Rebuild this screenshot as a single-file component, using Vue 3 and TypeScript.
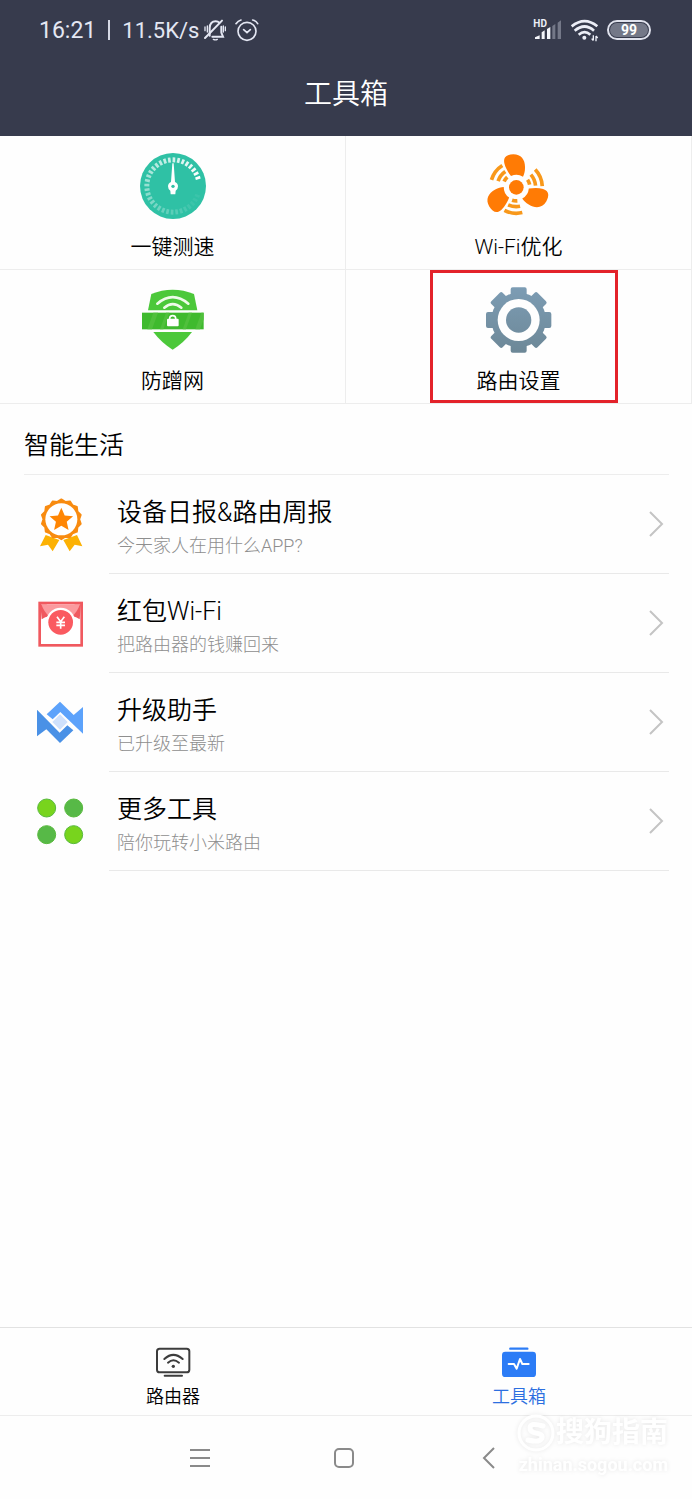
<script setup lang="ts">
interface Tool {
  id: string
  label: string
}
interface Entry {
  id: string
  title: string
  note: string
}
interface Tick {
  angle: number
  opacity: number
}

const tools: Tool[] = [
  { id: 'speed', label: '一键测速' },
  { id: 'fan', label: 'Wi-Fi优化' },
  { id: 'shield', label: '防蹭网' },
  { id: 'gear', label: '路由设置' },
]

const entries: Entry[] = [
  { id: 'badge', title: '设备日报&路由周报', note: '今天家人在用什么APP?' },
  { id: 'packet', title: '红包Wi-Fi', note: '把路由器的钱赚回来' },
  { id: 'upgrade', title: '升级助手', note: '已升级至最新' },
  { id: 'more', title: '更多工具', note: '陪你玩转小米路由' },
]

// Gauge ticks run counter-clockwise and fade out towards the end of the scale.
const ticks: Tick[] = Array.from({ length: 33 }, (_, i) => ({
  angle: 72 - i * 10,
  opacity: Math.max(0.06, 1 - i / 32),
}))

const ring = (cx: number, cy: number, outer: number, inner: number, count: number): string =>
  Array.from({ length: count * 2 }, (_, i) => {
    const r = i % 2 === 0 ? outer : inner
    const a = (Math.PI * i) / count - Math.PI / 2
    return `${(cx + r * Math.cos(a)).toFixed(1)},${(cy + r * Math.sin(a)).toFixed(1)}`
  }).join(' ')

const scallop = ring(184, 295, 60, 54, 14)
const star = ring(184, 297, 37, 17, 5)
const teeth = [0, 45, 90, 135, 180, 225, 270, 315]
</script>

<template>
  <div class="page">
    <header class="header">
      <div class="status">
        <span class="time">16:21</span>
        <span class="bar"></span>
        <span class="rate">11.5K/s</span>
        <svg class="bell" viewBox="612 54 72 72" fill="none" stroke="#e4e7f3" stroke-width="6" stroke-linecap="round">
          <path d="M632 107V84Q633 64 650 64Q657 64 661 68M667 80V98L672 110H640" />
          <path d="M618 114L669 62" />
          <path d="M643 118Q649 121 655 118M618 81V92M625 78V96M673 78V96M679 81V92" stroke-width="4" />
        </svg>
        <svg class="alarm" viewBox="710 54 72 72" fill="none" stroke="#e4e7f3" stroke-width="5" stroke-linecap="round">
          <circle cx="746" cy="94" r="27" />
          <path d="M736 89L746 98L756 89M713 71Q719 62 728 60M763 60Q773 62 778 71" />
        </svg>
        <span class="fill"></span>
        <svg class="signal" viewBox="561 54 87 72">
          <text x="562" y="80" class="hd">HD</text>
          <path d="M567 117V112L581 106V117ZM587 117V97L596 91V117ZM603 117V87L613 81V117Z" fill="#f4f5fb" />
          <path d="M619 117V78L628 72V117ZM635 117V68L645 61V117Z" fill="#747888" />
        </svg>
        <svg class="wifi" viewBox="672 54 87 72" fill="none" stroke="#eceef7" stroke-width="8">
          <path d="M677 79Q716 48 754 79M686 92Q716 67 744 92M698 104Q716 89 733 104" />
          <circle cx="715" cy="113" r="6" fill="#eceef7" stroke="none" />
          <path d="M742 106V121M737 116L742 122M750 124V108M755 114L750 108" stroke-width="4" />
        </svg>
        <span class="battery"><span class="level">99</span></span>
      </div>
      <h1 class="heading">工具箱</h1>
    </header>

    <main class="main">
      <div class="tools">
        <button v-for="tool in tools" :key="tool.id" type="button" class="tool">
          <svg v-if="tool.id === 'speed'" class="tool-icon" viewBox="84 33 210 210">
            <circle cx="189" cy="138" r="99" fill="#2fc1a5" />
            <rect
              v-for="tick in ticks"
              :key="tick.angle"
              x="185"
              y="52"
              width="8"
              height="15"
              fill="#fff"
              :opacity="tick.opacity"
              :transform="`rotate(${tick.angle} 189 138)`"
            />
            <path d="M187 70H191L195 126Q204 130 204 139Q204 148 197 152L196 163H182L181 152Q174 148 174 139Q174 130 183 126Z" fill="#fff" />
            <circle cx="189" cy="139" r="5" fill="#2fc1a5" />
          </svg>

          <svg v-else-if="tool.id === 'fan'" class="tool-icon" viewBox="102 33 210 210">
            <circle cx="199" cy="142" r="22" fill="#ff7b05" />
            <g v-for="turn in [0, 120, 240]" :key="turn" :transform="`rotate(${turn} 199 142)`">
              <path d="M163 70C159 50 172 44 190 43C214 43 226 60 225 84C225 94 223 102 219 110A38 38 0 0 0 183 108C174 96 166 84 163 70Z" fill="#ff7b05" />
              <g transform="rotate(7 199 142)" fill="none" stroke="#f8981a" stroke-width="11">
                <path d="M172 215A78 78 0 0 0 226 215M181 197A58 58 0 0 0 217 197M191 182A41 41 0 0 0 207 182" />
              </g>
            </g>
          </svg>

          <svg v-else-if="tool.id === 'shield'" class="tool-icon" viewBox="84 45 210 210">
            <path d="M124 72Q155 59 188 59Q221 59 252 72L262 121H114Z" fill="#4cc83a" />
            <path d="M142 101Q188 62 235 101M163 113Q188 92 214 113" fill="none" stroke="#effbe9" stroke-width="8" stroke-linecap="round" />
            <rect x="96" y="128" width="185" height="50" fill="#3fba2e" />
            <path d="M112 178L130 128H144L126 178ZM150 178L168 128H178L160 178ZM218 178L236 128H246L228 178ZM256 178L274 128H281V148L270 178Z" fill="#50c03c" />
            <path d="M130 186H246Q222 218 188 239Q154 218 130 186Z" fill="#4cc83a" />
            <path d="M179 150V144Q180 137 188 137Q196 137 197 144V150" fill="none" stroke="#fff" stroke-width="5" />
            <rect x="171" y="146" width="35" height="23" rx="3" fill="#fff" />
          </svg>

          <svg v-else class="tool-icon" viewBox="177 60 210 210">
            <defs>
              <linearGradient id="steel" x1="0" y1="0" x2="0" y2="1">
                <stop offset="0" stop-color="#7d9db5" />
                <stop offset="1" stop-color="#6c8796" />
              </linearGradient>
              <mask id="cog">
                <circle cx="281" cy="165" r="82" fill="#fff" />
                <path
                  v-for="turn in teeth"
                  :key="turn"
                  d="M252 100L257 88V73Q257 67 263 67H299Q305 67 305 73V88L310 100Z"
                  fill="#fff"
                  :transform="`rotate(${turn} 281 165)`"
                />
                <circle cx="281" cy="165" r="63" fill="#000" />
                <circle cx="281" cy="165" r="38" fill="#fff" />
              </mask>
            </defs>
            <rect x="177" y="60" width="210" height="210" fill="url(#steel)" mask="url(#cog)" />
          </svg>
          <span class="tool-label">{{ tool.label }}</span>
          <span v-if="tool.id === 'gear'" class="marker"></span>
        </button>
      </div>

      <section class="life">
        <h2 class="life-title">智能生活</h2>
        <a v-for="entry in entries" :key="entry.id" href="#" class="entry">
          <svg v-if="entry.id === 'badge'" class="entry-icon" viewBox="99 228 168 168">
            <path d="M137 342L120 376L144 371L158 391L178 357ZM231 342L247 376L224 371L209 391L190 357Z" fill="#fcb103" />
            <polygon :points="scallop" fill="#f88b10" stroke="#f88b10" stroke-width="5" stroke-linejoin="round" />
            <circle cx="184" cy="295" r="48" fill="#fff" />
            <polygon :points="star" fill="#ff8604" />
          </svg>

          <svg v-else-if="entry.id === 'packet'" class="entry-icon" viewBox="99 528 168 168">
            <rect x="119" y="549" width="126" height="127" fill="#fff" stroke="#f0595f" stroke-width="8" />
            <path d="M121 553L125 598Q134 590 150 588L140 553ZM243 553L239 598Q230 590 214 588L224 553Z" fill="#f0595f" />
            <path d="M124 553H240Q232 576 216 590H148Q132 576 124 553Z" fill="#fb9a9e" />
            <circle cx="182" cy="607" r="44" fill="#fff" />
            <circle cx="182" cy="607" r="37" fill="#fa5a60" />
            <path d="M171 590L182 605L193 590M182 605V626M169 607H195M169 616H195" fill="none" stroke="#fff" stroke-width="5" />
          </svg>

          <svg v-else-if="entry.id === 'upgrade'" class="entry-icon" viewBox="99 105 168 168">
            <polygon points="140,163 180,125 221,165 249,141 249,221 181,156 158,178" fill="#5ca2fb" />
            <polygon points="220,211 180,249 139,208 111,229 111,149 179,218 202,196" fill="#4a91e6" />
            <polygon points="180,163 203,186 180,209 157,186" fill="#cfe1fc" />
          </svg>

          <svg v-else class="entry-icon" viewBox="99 402 168 168">
            <g stroke="#57b93c" stroke-width="3">
              <circle cx="140" cy="444" r="27" fill="#78d41d" />
              <circle cx="221" cy="444" r="27" fill="#57b947" />
              <circle cx="140" cy="524" r="27" fill="#57b947" />
              <circle cx="221" cy="524" r="27" fill="#78d41d" />
            </g>
          </svg>

          <span class="entry-body">
            <span class="entry-text">
              <span class="entry-title">{{ entry.title }}</span>
              <span class="entry-note">{{ entry.note }}</span>
            </span>
            <svg class="chevron" viewBox="0 0 16 28" fill="none" stroke="#c4c4c4" stroke-width="2">
              <path d="M2 2L14 14L2 26" />
            </svg>
          </span>
        </a>
      </section>
    </main>

    <nav class="tabs">
      <a href="#" class="tab">
        <svg class="tab-icon" viewBox="104 78 108 96" fill="none" stroke="#3c3c3c" stroke-width="6">
          <rect x="110" y="86" width="97" height="71" rx="8" />
          <path d="M133 167H185M132 117Q159 92 187 117M143 128Q159 114 176 128" stroke-linecap="round" />
          <circle cx="159" cy="139" r="5" fill="#3c3c3c" stroke="none" />
        </svg>
        <span>路由器</span>
      </a>
      <a href="#" class="tab tab-active">
        <svg class="tab-icon" viewBox="123 78 108 96" fill="none">
          <path d="M151 86H202" stroke="#2c7cf6" stroke-width="7" stroke-linecap="round" />
          <rect x="126" y="95" width="102" height="76" rx="10" fill="#2c7cf6" />
          <path d="M146 132H162L170 146L180 117L187 132H206" stroke="#fff" stroke-width="6" stroke-linecap="round" stroke-linejoin="round" />
        </svg>
        <span>工具箱</span>
      </a>
    </nav>

    <div class="system">
      <button type="button" class="key" aria-label="菜单">
        <svg width="24" height="24" viewBox="0 0 24 24" fill="none" stroke="#8a8a8a" stroke-width="2">
          <path d="M2 4H22M2 12H22M2 20H22" />
        </svg>
      </button>
      <button type="button" class="key" aria-label="主屏幕">
        <svg width="24" height="24" viewBox="0 0 24 24" fill="none" stroke="#8a8a8a" stroke-width="2">
          <rect x="3" y="3" width="18" height="18" rx="4" />
        </svg>
      </button>
      <button type="button" class="key" aria-label="返回">
        <svg width="24" height="24" viewBox="0 0 24 24" fill="none" stroke="#8a8a8a" stroke-width="2">
          <path d="M18 2L8 12L18 22" />
        </svg>
      </button>
    </div>

    <div class="watermark">
      <div class="brand">
        <svg class="brand-logo" viewBox="0 0 40 40" fill="none" stroke="#fff" stroke-linecap="round">
          <circle cx="20" cy="20" r="17" stroke-width="3" />
          <path d="M27 13Q14 9 14 15Q14 19 20 20Q27 21 26 25Q24 30 12 27" stroke-width="5" />
        </svg>
        <span>搜狗指南</span>
      </div>
      <div class="site">zhinan.sogou.com</div>
    </div>
  </div>
</template>

<style>
body {
  margin: 0;
  background: #fefefe;
}
</style>

<style scoped>
.page {
  position: relative;
  display: flex;
  flex-direction: column;
  min-height: 100vh;
  background: #fefefe;
  color: #000;
  font-family: Roboto, "Noto Sans CJK SC", sans-serif;
  font-weight: 350;
}
.page * {
  box-sizing: border-box;
}
button {
  border: 0;
  padding: 0;
  background: none;
  color: inherit;
  font: inherit;
}
a {
  color: inherit;
  text-decoration: none;
}
svg {
  display: block;
  flex: none;
}
.header {
  height: 136px;
  background: #373b4d;
  color: #fff;
}
.status {
  display: flex;
  align-items: center;
  height: 60px;
  padding: 0 41px 0 39px;
  color: #e4e7f3;
  font-weight: 400;
}
.time {
  padding-top: 2px;
  font-size: 23px;
  line-height: 28px;
}
.bar {
  width: 2px;
  height: 20px;
  margin: 0 12px;
  background: #d5d8e4;
}
.rate {
  padding-top: 2px;
  font-size: 22px;
  line-height: 28px;
}
.bell,
.alarm {
  width: 24px;
  height: 24px;
  margin-left: 4px;
}
.alarm {
  margin-left: 8px;
}
.fill {
  flex: 1;
}
.signal,
.wifi {
  width: 29px;
  height: 24px;
  margin-right: 8px;
}
.hd {
  fill: #eceef7;
  font-size: 30px;
  font-weight: 700;
}
.battery {
  width: 44px;
  height: 20px;
  padding: 1px;
  border: 2px solid #dfe1ec;
  border-radius: 10px;
}
.level {
  display: block;
  border-radius: 7px;
  background: #747888;
  color: #fff;
  font-size: 14px;
  font-weight: 700;
  line-height: 14px;
  text-align: center;
}
.heading {
  margin: 0;
  padding-top: 14px;
  font-size: 28px;
  font-weight: 350;
  line-height: 42px;
  text-align: center;
}
.main {
  flex: 1;
}
.tools {
  display: grid;
  grid-template-columns: 1fr 1fr;
}
.tool {
  position: relative;
  display: flex;
  flex-direction: column;
  align-items: center;
  gap: 11px;
  height: 134px;
  padding-top: 15px;
  border-right: 1px solid #ededed;
  border-bottom: 1px solid #ededed;
}
.tool-icon {
  width: 70px;
  height: 70px;
}
.tool-label {
  font-size: 21px;
  line-height: 30px;
}
.marker {
  position: absolute;
  top: 0;
  left: calc(50% - 89px);
  width: 188px;
  height: 133px;
  border: 3px solid #e3222a;
}
.life {
  padding: 0 23px 0 24px;
}
.life-title {
  margin: 0;
  padding: 24px 0 10px;
  border-bottom: 1px solid #ededed;
  font-size: 25px;
  font-weight: 350;
  line-height: 36px;
}
.entry {
  display: flex;
  align-items: center;
}
.entry-icon {
  width: 56px;
  height: 56px;
  margin: 0 20px 0 9px;
}
.entry-body {
  display: flex;
  flex: 1;
  align-items: center;
  height: 99px;
  padding: 0 5px 0 8px;
  border-bottom: 1px solid #e9e9e9;
}
.entry-text {
  display: flex;
  flex: 1;
  flex-direction: column;
  padding: 20px 0 12px;
}
.entry-title {
  font-size: 25px;
  line-height: 36px;
}
.entry-note {
  color: #8e8e8e;
  font-size: 18px;
  font-weight: 300;
  line-height: 30px;
}
.chevron {
  width: 16px;
  height: 28px;
}
.tabs {
  display: grid;
  grid-template-columns: 1fr 1fr;
  border-top: 1px solid #e2e2e2;
  border-bottom: 1px solid #ededed;
}
.tab {
  display: flex;
  flex-direction: column;
  align-items: center;
  gap: 7px;
  padding: 18px 0 6px;
  font-size: 18px;
  line-height: 24px;
}
.tab-active {
  color: #2c6fe0;
}
.tab-icon {
  width: 36px;
  height: 32px;
}
.system {
  display: grid;
  grid-template-columns: repeat(3, 144px);
  justify-content: center;
  height: 83px;
  padding-right: 4px;
}
.key {
  display: flex;
  align-items: center;
  justify-content: center;
}
.watermark {
  position: absolute;
  right: 24px;
  bottom: 22px;
  color: #fff;
  font-weight: 700;
  pointer-events: none;
  filter: drop-shadow(0 0 2px rgba(0, 0, 0, 0.09));
}
.brand {
  display: flex;
  align-items: center;
  font-size: 28px;
  line-height: 40px;
}
.brand-logo {
  width: 40px;
  height: 40px;
}
.site {
  font-size: 18px;
  line-height: 24px;
  text-align: right;
}
</style>
